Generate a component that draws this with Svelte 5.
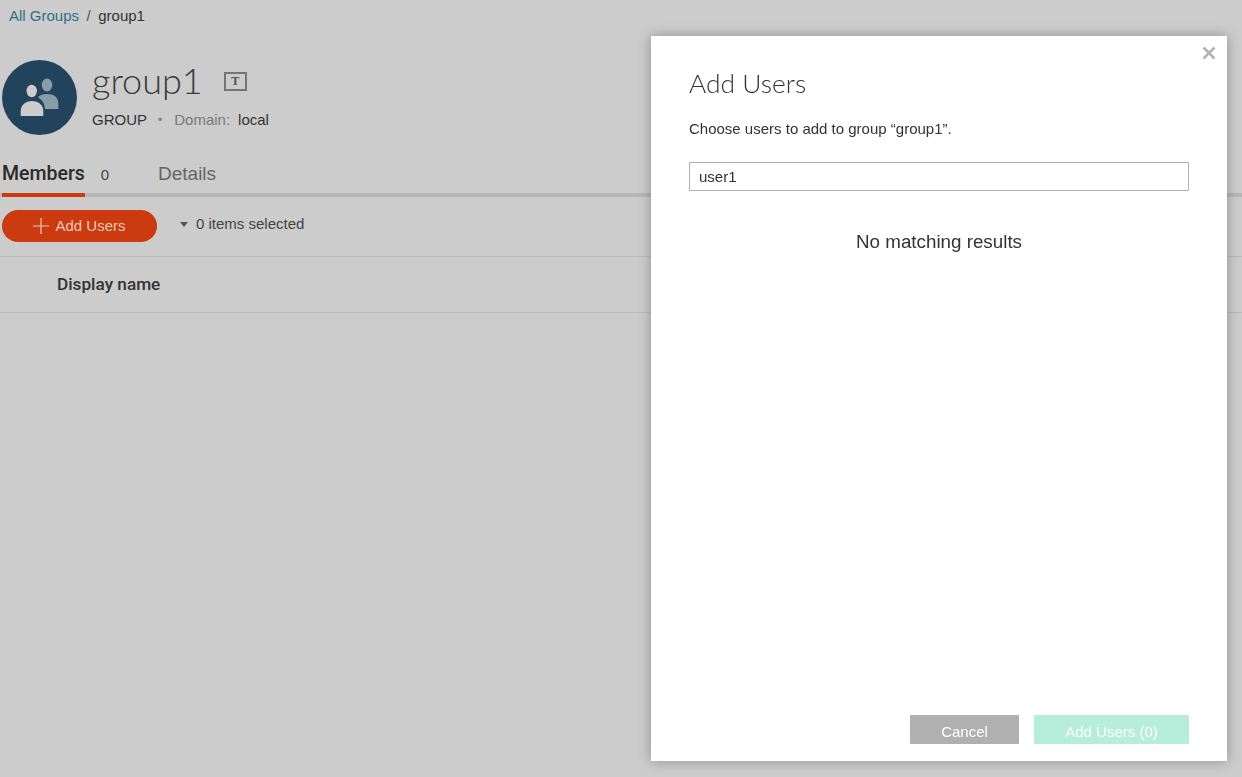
<script>
  let query = $state('user1');
</script>

<div class="page">
  <nav class="crumbs">
    <a href="#groups">All Groups</a>
    <span class="sep">/</span>
    <span class="current">group1</span>
  </nav>

  <header class="head">
    <div class="avatar">
      <svg viewBox="0 0 75 75" width="75" height="75" aria-hidden="true">
        <circle cx="37.500" cy="37.500" r="37.500" fill="#21435c" />
        <ellipse cx="45" cy="25" rx="5.300" ry="6.500" fill="#8b9ca9" />
        <path d="M36 37c2-2 5-3 9-3 6.500 0 11.300 3 11.300 9v6H43c0-5-3-9-7-12z" fill="#8b9ca9" />
        <ellipse cx="29.700" cy="31" rx="5.200" ry="6.200" fill="#ccc" />
        <path d="M18.700 56v-5c0-6 5-10 11.300-10s11.300 4 11.300 10v5z" fill="#ccc" />
      </svg>
    </div>
    <div class="head-text">
      <div class="title-row">
        <h1>group1</h1>
        <span class="tag">T</span>
      </div>
      <div class="meta">
        <span class="kind">GROUP</span>
        <span class="dot">•</span>
        <span class="muted">Domain:</span>
        <span class="kind">local</span>
      </div>
    </div>
  </header>

  <div class="tabs">
    <div class="tab active">Members <span class="count">0</span></div>
    <div class="tab">Details</div>
  </div>

  <div class="toolbar">
    <button class="add">
      <svg viewBox="0 0 16 16" width="16" height="16" aria-hidden="true">
        <path d="M8 0v16M0 8h16" stroke="#e8c9bd" stroke-width="1.200" fill="none" />
      </svg>
      Add Users
    </button>
    <div class="selected"><span class="caret"></span>0 items selected</div>
  </div>

  <div class="table-head">Display name</div>
</div>

<div class="modal" role="dialog" aria-label="Add Users">
  <button class="close" aria-label="Close">
    <svg viewBox="0 0 14 14" width="14" height="14" aria-hidden="true">
      <path d="M1.500 1.500l11 11M12.500 1.500l-11 11" stroke="#b3b3b3" stroke-width="2.600" fill="none" />
    </svg>
  </button>
  <h2>Add Users</h2>
  <p class="lead">Choose users to add to group “group1”.</p>
  <input class="search" bind:value={query} />
  <div class="empty">No matching results</div>
  <div class="actions">
    <button class="btn cancel">Cancel</button>
    <button class="btn confirm">Add Users (0)</button>
  </div>
</div>

<style>
  :global(body) {
    margin: 0;
    background: #ccc;
    font-family: "Liberation Sans", Arial, sans-serif;
    color: #333;
  }
  .page {
    height: 777px;
    overflow: hidden;
    box-sizing: border-box;
    padding-top: 8px;
  }
  .crumbs {
    padding-left: 9px;
    font-size: 15px;
    line-height: 16px;
    display: flex;
    gap: 7.500px;
  }
  .crumbs a { text-decoration: none; color: #2f6f8a; }
  .sep { color: #555; }
  .current { color: #333; }
  .head {
    display: flex;
    margin-top: 36px;
    padding-left: 2px;
    gap: 15px;
    height: 75px;
  }
  .avatar { width: 75px; height: 75px; }
  .avatar svg { display: block; }
  .title-row { display: flex; align-items: center; gap: 21px; height: 44px; }
  h1 {
    margin: 0 0 3px;
    font-family: Lato, sans-serif;
    font-weight: 300;
    font-size: 36px;
    line-height: 41px;
    color: #3a3a3a;
  }
  .tag {
    box-sizing: border-box;
    width: 23px;
    height: 19px;
    margin-bottom: 1px;
    border: 2px solid #757575;
    font-family: "Liberation Serif", serif;
    font-weight: 700;
    font-size: 12px;
    line-height: 15px;
    text-align: center;
    color: #555;
  }
  .meta {
    font-size: 15px;
    line-height: 16px;
    margin-top: 8px;
    display: flex;
    gap: 8px;
  }
  .kind { color: #333; }
  .dot { color: #808080; margin: 0 4px 0 3px; font-size: 12px; }
  .muted { color: #7a7a7a; }
  .tabs {
    display: flex;
    margin-top: 22px;
    height: 40px;
    box-sizing: border-box;
    border-bottom: 4px solid #b8b8b8;
    padding-left: 2px;
    gap: 49px;
  }
  .tab {
    font-size: 19px;
    line-height: 33px;
    color: #666;
  }
  .tab.active {
    position: relative;
    color: #2a2a2a;
    font-family: Roboto, "Liberation Sans", sans-serif;
    font-weight: 500;
    font-size: 19.500px;
  }
  .tab.active::after {
    content: "";
    position: absolute;
    left: 0;
    bottom: -4px;
    width: 83px;
    height: 4px;
    background: #cc3a0f;
  }
  .count {
    font-family: "Liberation Sans", sans-serif;
    font-weight: 400;
    font-size: 15px;
    color: #444;
    margin-left: 11px;
  }
  .toolbar {
    display: flex;
    padding-left: 2px;
    gap: 23px;
    margin-top: 13px;
    height: 46px;
    border-bottom: 1px solid #bababa;
  }
  .add {
    display: flex;
    align-items: center;
    justify-content: center;
    gap: 6px;
    width: 155px;
    height: 32px;
    border: 0;
    border-radius: 16px;
    background: #cc3a0f;
    color: #e8c9bd;
    font: 15px/16px "Liberation Sans", sans-serif;
    padding: 0 0 1px;
  }
  .selected {
    display: flex;
    align-items: center;
    height: 27px;
    font-size: 15px;
    color: #444;
  }
  .caret {
    width: 0;
    height: 0;
    border-left: 4px solid transparent;
    border-right: 4px solid transparent;
    border-top: 5px solid #555;
    margin-right: 8px;
    margin-top: 1px;
  }
  .table-head {
    box-sizing: border-box;
    height: 56px;
    padding: 18px 0 0 57px;
    border-bottom: 1px solid #bababa;
    font-family: Roboto, "Liberation Sans", sans-serif;
    font-weight: 500;
    font-size: 17.200px;
    line-height: 19px;
    color: #333;
  }
  .modal {
    position: fixed;
    left: 651px;
    top: 36px;
    width: 576px;
    height: 725px;
    box-sizing: border-box;
    padding: 0 38px;
    background: #fff;
    box-shadow: 0 0 12px rgba(0, 0, 0, 0.3);
    display: flex;
    flex-direction: column;
  }
  .close {
    position: absolute;
    top: 10px;
    right: 11px;
    padding: 0;
    border: 0;
    background: none;
    height: 14px;
  }
  h2 {
    margin: 31px 0 0;
    font-family: Lato, sans-serif;
    font-weight: 300;
    font-size: 26.400px;
    line-height: 32px;
    color: #333;
  }
  .lead {
    margin: 22px 0 0;
    font-size: 15px;
    line-height: 16px;
    color: #333;
  }
  .search {
    box-sizing: border-box;
    margin-top: 25px;
    width: 500px;
    height: 29px;
    padding: 0 9px;
    border: 1px solid #b3b3b3;
    border-radius: 0;
    outline: none;
    font: 15px "Liberation Sans", sans-serif;
    color: #333;
  }
  .empty {
    margin-top: 40px;
    text-align: center;
    font-size: 18.800px;
    line-height: 22px;
    color: #333;
  }
  .actions {
    margin-top: auto;
    margin-bottom: 17px;
    display: flex;
    justify-content: flex-end;
    gap: 15px;
  }
  .btn {
    height: 29px;
    border: 0;
    border-radius: 1px;
    color: #fff;
    font: 15px "Liberation Sans", sans-serif;
    padding: 3px 0 0;
  }
  .cancel { width: 109px; background: #b0b0b0; }
  .confirm { width: 155px; background: #b6eddb; }
</style>
